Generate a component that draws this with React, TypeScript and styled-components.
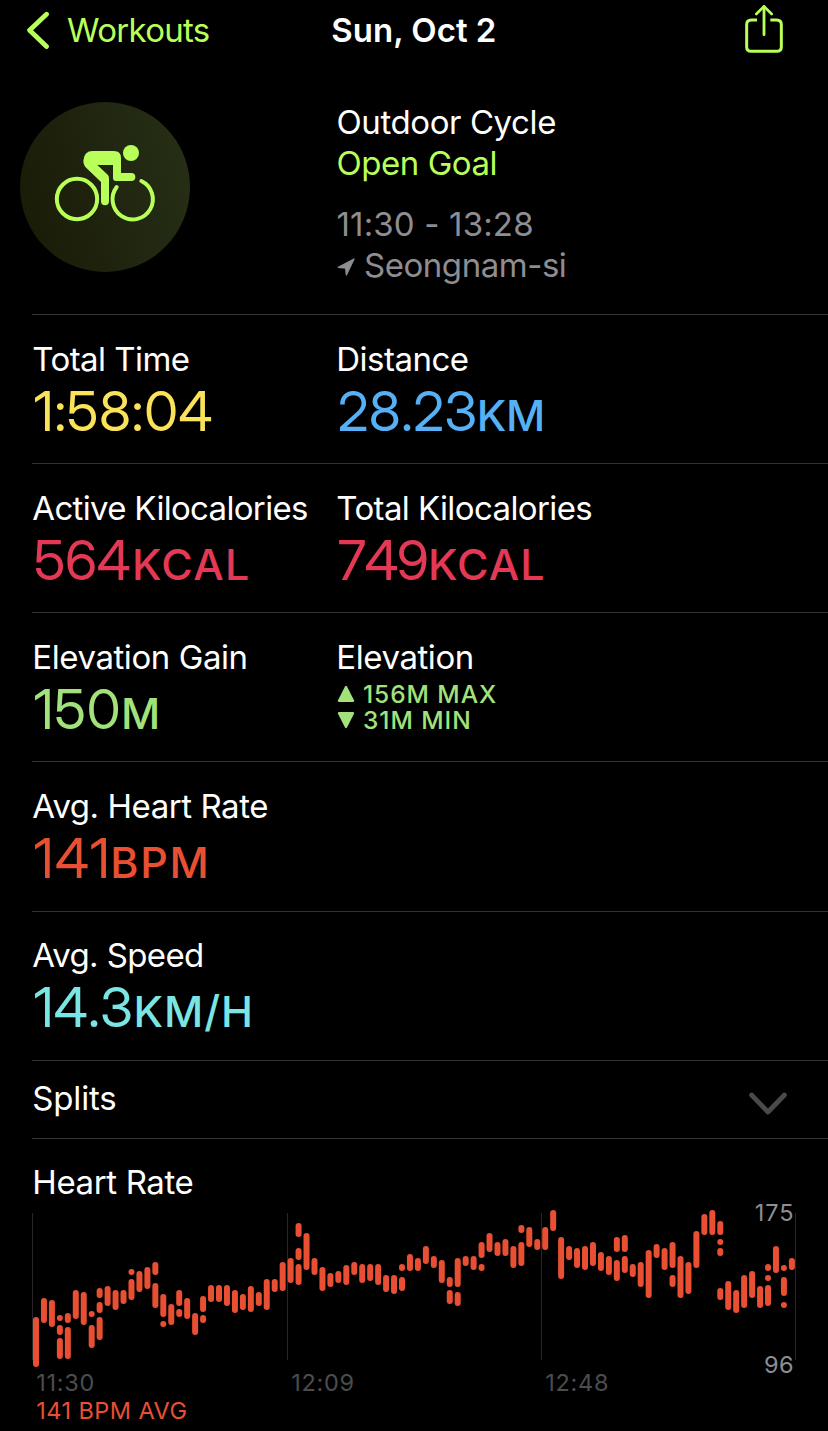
import React from "react";
import styled, { createGlobalStyle } from "styled-components";

const GlobalStyle = createGlobalStyle`
  html, body { margin: 0; background: #000; }
  body { font-family: Inter, "Liberation Sans", sans-serif; color: #fff; }
`;

const Screen = styled.main`
  width: 828px;
  height: 1431px;
  overflow: hidden;
  background: #000;
  display: flex;
  flex-direction: column;
`;

const Text = styled.span<{ $track?: number; $color?: string; $bold?: boolean }>`
  display: block;
  font-size: 33px;
  line-height: 41px;
  white-space: nowrap;
  font-weight: ${(p) => (p.$bold ? 600 : 400)};
  letter-spacing: ${(p) => p.$track ?? -0.5}px;
  color: ${(p) => p.$color ?? "#fff"};
`;

const NavBar = styled.header`
  height: 60px;
  box-sizing: border-box;
  display: grid;
  grid-template-columns: 331.3px 1fr auto;
  align-items: start;
  padding-right: 44px;
`;

const BackButton = styled.a`
  display: flex;
  padding: 10px 0 0 26px;
  gap: 17px;
  svg { margin-top: 1px; }
`;

const NavTitle = styled.h1`
  margin: 0;
  padding-top: 10px;
`;

const Hero = styled.section`
  height: 254px;
  box-sizing: border-box;
  display: grid;
  grid-template-columns: 316.5px 1fr;
  padding: 42px 0 0 20px;
`;

const Badge = styled.div`
  width: 170px;
  height: 170px;
  border-radius: 50%;
  background: linear-gradient(75deg, #191b07 5%, #20250f 50%, #262f16 95%);
  display: flex;
  align-items: center;
  justify-content: center;
  svg { margin-bottom: 4px; }
`;

const HeroInfo = styled.div`
  display: flex;
  flex-direction: column;
`;

const Times = styled.div`
  margin-top: 20px;
`;

const Place = styled.div`
  display: flex;
  align-items: center;
  gap: 9.5px;
  svg { margin-top: 2px; }
`;

const Row = styled.section<{ $height: number; $pad?: number }>`
  height: ${(p) => p.$height}px;
  box-sizing: border-box;
  margin-left: 32px;
  padding: ${(p) => p.$pad ?? 24}px 0 0 0.3px;
  border-top: 1px solid #323234;
  display: grid;
  grid-template-columns: 304px 1fr;
`;

const Metric = styled.div`
  display: flex;
  flex-direction: column;
`;

const Value = styled.div<{ $color: string; $track: number }>`
  display: flex;
  align-items: baseline;
  margin: 1px 0 0 1.5px;
  font-family: "Inter Display", Inter, sans-serif;
  font-size: 55px;
  line-height: 60px;
  white-space: nowrap;
  font-kerning: none;
  color: ${(p) => p.$color};
  letter-spacing: ${(p) => p.$track}px;
`;

const Unit = styled.span<{ $gap: number; $track: number }>`
  font-family: Inter, sans-serif;
  font-size: 43px;
  font-weight: 450;
  line-height: 60px;
  font-kerning: normal;
  margin-left: ${(p) => p.$gap}px;
  letter-spacing: ${(p) => p.$track}px;
`;

const Range = styled.div`
  display: flex;
  align-items: center;
  gap: 8px;
  height: 26px;
  font-size: 24.5px;
  line-height: 26px;
  font-weight: 500;
  letter-spacing: 0.95px;
  color: #a3e27b;
`;

const Ranges = styled.div`
  margin: 3px 0 0 0.7px;
`;

const SplitsRow = styled.section`
  height: 78px;
  box-sizing: border-box;
  margin-left: 32px;
  padding: 17px 41px 0 0.3px;
  border-top: 1px solid #323234;
  display: flex;
  justify-content: space-between;
  svg { margin-top: 14px; }
`;

const ChartSection = styled.section`
  margin-left: 32px;
  padding: 23px 0 0 0.3px;
  border-top: 1px solid #323234;
  display: flex;
  flex-direction: column;
`;

const ChartArea = styled.div`
  position: relative;
  width: 764px;
  height: 166px;
  margin-left: -0.3px;
  svg { display: block; }
`;

const Bound = styled.span<{ $top: number; $track: number }>`
  position: absolute;
  right: 2.5px;
  top: ${(p) => p.$top}px;
  font-size: 23.5px;
  line-height: 28px;
  letter-spacing: ${(p) => p.$track}px;
  margin-right: -${(p) => p.$track}px;
  color: #8d8d92;
`;

const TimeAxis = styled.div`
  display: grid;
  grid-template-columns: 255px 254px 1fr;
  padding-left: 4px;
  font-size: 23.5px;
  line-height: 28px;
  letter-spacing: 0.7px;
  color: #4c4c4e;
`;

const Average = styled.div`
  padding-left: 4px;
  font-size: 23.5px;
  line-height: 28px;
  letter-spacing: 0.45px;
  color: #e95033;
`;

const LIME = "#b9ff59";
const GREY = "#8d8d92";

/* Heart-rate spans per time slot: [top, bottom] pairs in thirds of a pixel. */
const SLOTS: number[][] = [
  [366, 516], [309, 384], [315, 396], [360, 378, 390, 420, 429, 492], [354, 384, 396, 492], [285, 372],
  [291, 390], [348, 366, 390, 459], [279, 309, 321, 354, 366, 435], [273, 333], [285, 345], [285, 327],
  [222, 240, 252, 315], [228, 291], [216, 282], [201, 240, 264, 339], [297, 366, 378, 396], [327, 390],
  [285, 333, 342, 366], [309, 372], [354, 420], [303, 351, 360, 384], [270, 321], [270, 321],
  [270, 333], [285, 354], [297, 345], [273, 351], [291, 333], [252, 345], [252, 291], [201, 288],
  [189, 264], [84, 126, 159, 195, 207, 270], [114, 225], [189, 240], [216, 288], [234, 276],
  [228, 264], [210, 270], [201, 240], [207, 264], [207, 258], [207, 270], [240, 291], [240, 297],
  [207, 228, 246, 288], [177, 228], [189, 228], [153, 207], [183, 219], [195, 264],
  [246, 276, 285, 327], [189, 276, 291, 333], [183, 213], [183, 225], [141, 189, 207, 228], [114, 171],
  [141, 183], [132, 183], [153, 219], [90, 114, 141, 213], [96, 156], [132, 165], [96, 165], [45, 108],
  [126, 252], [153, 195], [159, 219], [153, 225], [141, 213], [171, 228], [183, 240],
  [126, 171, 195, 258], [120, 171, 183, 234], [207, 246], [201, 276], [165, 309], [147, 189],
  [159, 225], [141, 219, 240, 276], [183, 309], [201, 297], [108, 219], [57, 120], [45, 120],
  [78, 120, 132, 150, 159, 183, 279, 315], [258, 345], [285, 354], [240, 339], [228, 309], [273, 339],
  [207, 228, 240, 258, 270, 333], [153, 234], [210, 228, 246, 303, 321, 339], [189, 225],
];

function HeartRateChart() {
  const bars: React.ReactElement[] = [];
  SLOTS.forEach((slot, i) => {
    for (let k = 0; k < slot.length; k += 2) {
      bars.push(
        <rect key={`${i}-${k}`} x={3 + i * 23.87} y={slot[k]} width={18} height={slot[k + 1] - slot[k]} rx={9} />
      );
    }
  });
  return (
    <svg width="764" height="166" viewBox="0 0 2292 498" overflow="visible">
      <g transform="translate(0 -24)">
        <g fill="#262628">
          {[0, 765, 1527, 2289].map((x) => (
            <rect key={x} x={x} y={54} width={3} height={441} />
          ))}
        </g>
        <g fill="#e95033">{bars}</g>
      </g>
    </svg>
  );
}

function CyclistIcon() {
  return (
    <svg width="130" height="110" viewBox="0 0 390 330" fill="none" stroke={LIME} strokeLinecap="round" strokeLinejoin="round">
      <circle cx="111" cy="207" r="60.5" strokeWidth="12" />
      <path d="M304 153A60.5 60.5 0 1 1 230 171" strokeWidth="12" />
      <circle cx="273" cy="69" r="24" fill={LIME} stroke="none" />
      <path
        fill={LIME}
        stroke="none"
        d="M158 63H222Q243 63 243 84V129H274A12 12 0 0 1 274 153H228Q219 153 219 144V105H172L203 134Q207 138 207 145V214A12 12 0 0 1 183 214V156L140 115Q130 105 130 92Q132 63 158 63Z"
      />
    </svg>
  );
}

interface MetricProps {
  label: string;
  track: number;
  value: string;
  valueTrack: number;
  color: string;
  unit?: string;
  unitGap?: number;
  unitTrack?: number;
}

function MetricCell({ label, track, value, valueTrack, color, unit, unitGap = 0, unitTrack = 0 }: MetricProps) {
  return (
    <Metric>
      <Text $track={track}>{label}</Text>
      <Value $color={color} $track={valueTrack}>
        {value}
        {unit && <Unit $gap={unitGap} $track={unitTrack}>{unit}</Unit>}
      </Value>
    </Metric>
  );
}

export default function App() {
  return (
    <Screen>
      <GlobalStyle />
      <NavBar>
        <BackButton>
          <svg width="24" height="40" viewBox="0 0 24 40" fill="none" stroke={LIME} strokeWidth="4.8" strokeLinecap="round" strokeLinejoin="round">
            <path d="M20.5 3.2L3.6 19.2L20.5 35.5" />
          </svg>
          <Text $track={-0.7} $color={LIME}>Workouts</Text>
        </BackButton>
        <NavTitle>
          <Text as="span" $bold $track={0}>Sun, Oct 2</Text>
        </NavTitle>
        <svg width="40" height="56" viewBox="0 0 120 168" fill="none" stroke={LIME} strokeWidth="9" strokeLinecap="round" strokeLinejoin="round">
          <path strokeLinecap="butt" d="M39 60H22Q8 60 8 74V141Q8 154 22 154H98Q112 154 112 141V74Q112 60 98 60H79" />
          <path d="M60 104V20" strokeWidth="8.5" />
          <path d="M37 42L60 19L83 42" strokeWidth="8" />
        </svg>
      </NavBar>

      <Hero>
        <Badge><CyclistIcon /></Badge>
        <HeroInfo>
          <Text $track={-0.41}>Outdoor Cycle</Text>
          <Text $track={-0.46} $color={LIME}>Open Goal</Text>
          <Times>
            <Text $track={0.16} $color={GREY}>11:30 - 13:28</Text>
            <Place>
              <svg width="18" height="18" viewBox="0 0 54 54" fill={GREY} stroke={GREY} strokeWidth="4" strokeLinejoin="round">
                <path d="M51 3L28 51L26 30L4 28Z" />
              </svg>
              <Text $track={-0.46} $color={GREY}>Seongnam-si</Text>
            </Place>
          </Times>
        </HeroInfo>
      </Hero>

      <Row $height={149}>
        <MetricCell label="Total Time" track={-0.55} value="1:58:04" valueTrack={0.52} color="#fae35a" />
        <MetricCell label="Distance" track={-0.51} value="28.23" valueTrack={0.15} color="#55b0f5" unit="KM" unitGap={-0.6} unitTrack={-0.3} />
      </Row>
      <Row $height={149}>
        <MetricCell label="Active Kilocalories" track={-0.68} value="564" valueTrack={-0.39} color="#e43955" unit="KCAL" unitGap={1.6} unitTrack={1.3} />
        <MetricCell label="Total Kilocalories" track={-0.61} value="749" valueTrack={-1.7} color="#e43955" unit="KCAL" unitGap={0.8} unitTrack={1.1} />
      </Row>
      <Row $height={149}>
        <MetricCell label="Elevation Gain" track={-0.43} value="150" valueTrack={0.6} color="#a3e27b" unit="M" />
        <Metric>
          <Text $track={-0.43}>Elevation</Text>
          <Ranges>
            <Range>
              <svg width="18" height="18" viewBox="0 0 18 18" fill="#a3e27b">
                <path d="M8 1.6Q9 0 10 1.6L17 15.2Q17.8 17 16 17H2Q.2 17 1 15.2Z" />
              </svg>
              156M MAX
            </Range>
            <Range>
              <svg width="18" height="18" viewBox="0 0 18 18" fill="#a3e27b">
                <path d="M8 16.4Q9 18 10 16.4L17 2.8Q17.8 1 16 1H2Q.2 1 1 2.8Z" />
              </svg>
              31M MIN
            </Range>
          </Ranges>
        </Metric>
      </Row>
      <Row $height={150}>
        <MetricCell label="Avg. Heart Rate" track={-0.45} value="141" valueTrack={1.2} color="#e95033" unit="BPM" unitGap={-1} unitTrack={1.7} />
      </Row>
      <Row $height={149} $pad={23}>
        <MetricCell label="Avg. Speed" track={-0.62} value="14.3" valueTrack={0.1} color="#7ae5e2" unit="KM/H" unitGap={0.5} unitTrack={0.9} />
      </Row>

      <SplitsRow>
        <Text $track={-0.17}>Splits</Text>
        <svg width="38" height="24" viewBox="0 0 38 24" fill="none" stroke="#4a4a4d" strokeWidth="4.8" strokeLinecap="round" strokeLinejoin="round">
          <path d="M2.6 3L19 20L35.4 3" />
        </svg>
      </SplitsRow>

      <ChartSection>
        <Text $track={-0.38}>Heart Rate</Text>
        <ChartArea>
          <HeartRateChart />
          <Bound $top={-4} $track={0.9}>175</Bound>
          <Bound $top={148} $track={0.43}>96</Bound>
        </ChartArea>
        <TimeAxis>
          <span>11:30</span>
          <span>12:09</span>
          <span>12:48</span>
        </TimeAxis>
        <Average>141 BPM AVG</Average>
      </ChartSection>
    </Screen>
  );
}
